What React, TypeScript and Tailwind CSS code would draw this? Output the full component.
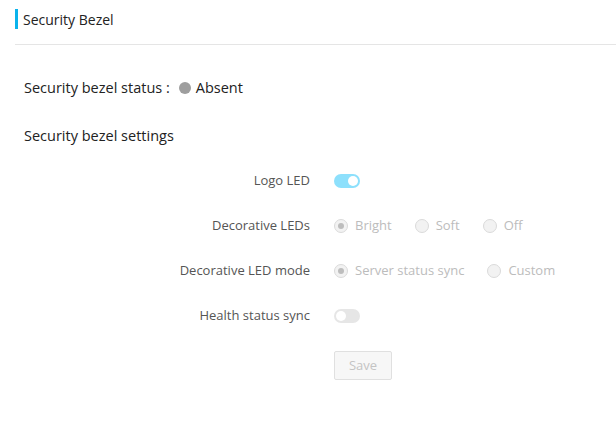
export default function App() {
  const font = { fontFamily: '"Open Sans", "Noto Sans", sans-serif' };
  return (
    <div className="w-[616px] h-[437px] bg-white text-[13px]" style={font}>
      {/* Header */}
      <div className="ml-[15px] h-[45px] border-b border-[#e5e5e5] pt-[9px]">
        <div className="flex items-center h-[20px]">
          <div className="w-[3px] h-[20px] bg-[#0ab3ec]" />
          <span className="ml-[5px] text-[14px] text-[#222]">Security Bezel</span>
        </div>
      </div>

      {/* Status */}
      <div className="ml-[24px] mt-[33px] flex items-center h-[20px] text-[14.5px] text-[#222]">
        <span>Security bezel status :</span>
        <span className="ml-[9px] w-[12px] h-[12px] rounded-full bg-[#9e9e9e]" />
        <span className="ml-[5px]">Absent</span>
      </div>

      <div className="ml-[24px] mt-[28px] h-[20px] flex items-center text-[14.5px] text-[#222]">
        Security bezel settings
      </div>

      {/* Settings */}
      <div className="mt-[12px] flex flex-col">
        <Row label="Logo LED">
          <Toggle on />
        </Row>
        <Row label="Decorative LEDs">
          <Radio checked label="Bright" />
          <Radio label="Soft" />
          <Radio label="Off" />
        </Row>
        <Row label="Decorative LED mode">
          <Radio checked label="Server status sync" />
          <Radio label="Custom" />
        </Row>
        <Row label="Health status sync">
          <Toggle />
        </Row>
        <div className="flex mt-[13px]">
          <div className="w-[334px]" />
          <button className="w-[58px] h-[29px] border border-[#e0e0e0] bg-[#f7f7f7] text-[#c4c4c4] text-[13px] rounded-[2px]">
            Save
          </button>
        </div>
      </div>
    </div>
  );
}

function Row({ label, children }: { label: string; children: React.ReactNode }) {
  return (
    <div className="flex items-center h-[45px]">
      <div className="w-[310px] text-right text-[#555]">{label}</div>
      <div className="ml-[24px] flex items-center gap-[23px]">{children}</div>
    </div>
  );
}

function Toggle({ on }: { on?: boolean }) {
  return (
    <div
      className={
        on
          ? 'w-[26px] h-[14px] rounded-full bg-[#8de0fc] flex items-center justify-end pr-[2px]'
          : 'w-[26px] h-[14px] rounded-full bg-[#e6e6e6] flex items-center justify-start pl-[2px]'
      }
    >
      <div className="w-[10px] h-[10px] rounded-full bg-white" />
    </div>
  );
}

function Radio({ checked, label }: { checked?: boolean; label: string }) {
  return (
    <div className="flex items-center">
      <div className="w-[14px] h-[14px] rounded-full border border-[#dadada] bg-[#f2f2f2] flex items-center justify-center">
        {checked && <div className="w-[6px] h-[6px] rounded-full bg-[#bdbdbd]" />}
      </div>
      <span className="ml-[7px] text-[#bcbcbc]">{label}</span>
    </div>
  );
}
